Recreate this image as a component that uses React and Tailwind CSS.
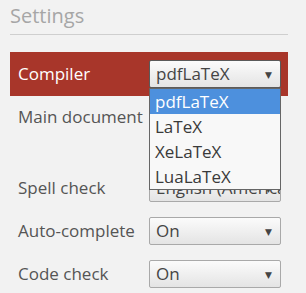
const font = { fontFamily: '"Open Sans", "DejaVu Sans", sans-serif' };

function Select({ value, open }) {
  return (
    <div
      className={`relative flex items-center w-[132px] h-[28px] pl-[6px] rounded-[2px] border bg-gradient-to-b from-[#fbfbfb] to-[#e4e4e4] text-[17px] leading-[22px] text-[#444] overflow-hidden whitespace-nowrap ${
        open ? 'border-[#5a5a5a]' : 'border-[#a9a9a9]'
      }`}
    >
      <span>{value}</span>
      <span className="absolute right-[8px] top-[9px] text-[9px] leading-[9px] text-[#444]">▼</span>
    </div>
  );
}

function Row({ label, value, active, height = 'h-[43px]', children }) {
  return (
    <div
      className={`relative flex items-center pl-2 pr-[7px] ${height} ${
        active ? 'bg-[#a8362a] text-white' : 'text-[#555]'
      }`}
    >
      <span className="w-[131px] text-[17px] whitespace-nowrap">{label}</span>
      <Select value={value} open={active} />
      {children}
    </div>
  );
}

export default function App() {
  const options = ['pdfLaTeX', 'LaTeX', 'XeLaTeX', 'LuaLaTeX'];

  return (
    <div className="w-[306px] h-[293px] bg-[#f2f2f2] overflow-hidden" style={font}>
      <div className="pl-[10px] pr-[18px]">
        <div className="border-b border-[#cfcfcf] pt-[2px] pb-[4px] text-[20px] leading-[28px] text-[#a6a6a6]">
          Settings
        </div>

        <div className="mt-[17px]">
          <Row label="Compiler" value="pdfLaTeX" active height="h-[44px]">
            {/* open dropdown list */}
            <div className="absolute z-10 left-[139px] top-[36px] w-[132px] border border-[#666] bg-[#f8f8f8] text-[17px] text-[#3a3a3a]">
              {options.map((o, i) => (
                <div
                  key={o}
                  className={`h-[25px] flex items-center pl-[5px] ${
                    i === 0 ? 'bg-[#4d90dd] text-white' : ''
                  }`}
                >
                  {o}
                </div>
              ))}
            </div>
          </Row>
          <div className="flex pl-2 pr-[7px] h-[70px] pt-[8px] text-[#555]">
            <span className="w-[131px] text-[17px] whitespace-nowrap">Main document</span>
            <Select value="main.tex" />
          </div>
          <Row label="Spell check" value="English (American)" />
          <Row label="Auto-complete" value="On" />
          <Row label="Code check" value="On" />
        </div>
      </div>
    </div>
  );
}
